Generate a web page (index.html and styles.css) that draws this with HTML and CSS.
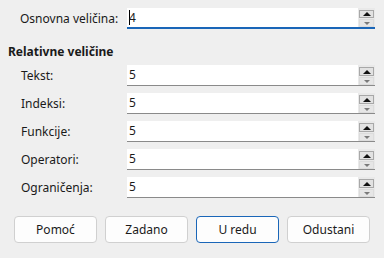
FILE: index.html
```html
<!DOCTYPE html>
<html>
<head>
<meta charset="utf-8">
<link rel="stylesheet" href="styles.css">
</head>
<body>
<div class="dialog">
  <div class="row top">
    <label class="lbl">Osnovna veličina:</label>
    <div class="spin focused">
      <div class="val"><span class="caret"></span>4</div>
      <div class="btns"><div class="up"><span class="tri-up"></span></div><div class="down"><span class="tri-down"></span></div></div>
    </div>
  </div>
  <div class="heading">Relativne veličine</div>
  <div class="rows">
    <div class="row">
      <label class="lbl">Tekst:</label>
      <div class="spin"><div class="val">5</div><div class="btns"><div class="up"><span class="tri-up"></span></div><div class="down"><span class="tri-down"></span></div></div></div>
    </div>
    <div class="row">
      <label class="lbl">Indeksi:</label>
      <div class="spin"><div class="val">5</div><div class="btns"><div class="up"><span class="tri-up"></span></div><div class="down"><span class="tri-down"></span></div></div></div>
    </div>
    <div class="row">
      <label class="lbl">Funkcije:</label>
      <div class="spin"><div class="val">5</div><div class="btns"><div class="up"><span class="tri-up"></span></div><div class="down"><span class="tri-down"></span></div></div></div>
    </div>
    <div class="row">
      <label class="lbl">Operatori:</label>
      <div class="spin"><div class="val">5</div><div class="btns"><div class="up"><span class="tri-up"></span></div><div class="down"><span class="tri-down"></span></div></div></div>
    </div>
    <div class="row">
      <label class="lbl">Ograničenja:</label>
      <div class="spin"><div class="val">5</div><div class="btns"><div class="up"><span class="tri-up"></span></div><div class="down"><span class="tri-down"></span></div></div></div>
    </div>
  </div>
  <div class="buttons">
    <button class="btn">Pomoć</button>
    <button class="btn">Zadano</button>
    <button class="btn default">U redu</button>
    <button class="btn">Odustani</button>
  </div>
</div>
</body>
</html>
```

FILE: styles.css
```css
html, body {
  margin: 0;
  padding: 0;
  background: #efefef;
}
body {
  font-family: "Noto Sans", "Liberation Sans", sans-serif;
  font-size: 12px;
  color: #1a1a1a;
  width: 384px;
  height: 258px;
  overflow: hidden;
}
.dialog {
  padding: 8px 9px 0 8px;
  display: flex;
  flex-direction: column;
}
.row {
  display: grid;
  grid-template-columns: 119px 248px;
  align-items: center;
  height: 21px;
}
.lbl {
  padding-left: 13px;
}
.top .lbl {
  padding-left: 12px;
}
.heading {
  font-weight: bold;
  margin-top: 15px;
  height: 16px;
  line-height: 16px;
}
.rows {
  margin-top: 5px;
  display: flex;
  flex-direction: column;
  gap: 7px;
}
.spin {
  display: flex;
  height: 21px;
  box-sizing: border-box;
  border-bottom: 1px solid #8a8a8a;
  background: #e9e9e9;
}
.spin.focused {
  border-bottom: 2px solid #1a66b8;
}
.val {
  flex: 1;
  background: #fff;
  padding-left: 2px;
  line-height: 20px;
}
.caret {
  display: inline-block;
  width: 1px;
  height: 15px;
  background: #000;
  vertical-align: -3px;
  margin-right: -1px;
}
.btns {
  width: 17px;
  display: flex;
  flex-direction: column;
  align-items: center;
  padding-top: 2px;
  gap: 1px;
}
.up, .down {
  width: 15px;
  box-sizing: border-box;
  display: flex;
  align-items: center;
  justify-content: center;
}
.up {
  height: 9px;
  border: 1px solid #a8a8a8;
  background: #e2e2e2;
}
.down {
  height: 8px;
  border: 1px solid #dcdcdc;
  background: #e6e6e6;
}
.tri-up {
  width: 0;
  height: 0;
  border-left: 4px solid transparent;
  border-right: 4px solid transparent;
  border-bottom: 4px solid #111;
}
.tri-down {
  width: 0;
  height: 0;
  border-left: 3px solid transparent;
  border-right: 3px solid transparent;
  border-top: 3px solid #7a7a7a;
}
.buttons {
  margin-top: 18px;
  display: flex;
  gap: 8px;
  padding-left: 6px;
}
.btn {
  width: 83px;
  height: 27px;
  box-sizing: border-box;
  background: #fdfdfd;
  border: 1px solid #d0d0d0;
  border-radius: 4px;
  font-family: inherit;
  font-size: 12px;
  color: #1a1a1a;
  padding: 0;
}
.btn.default {
  border-color: #1a66b8;
}
```
